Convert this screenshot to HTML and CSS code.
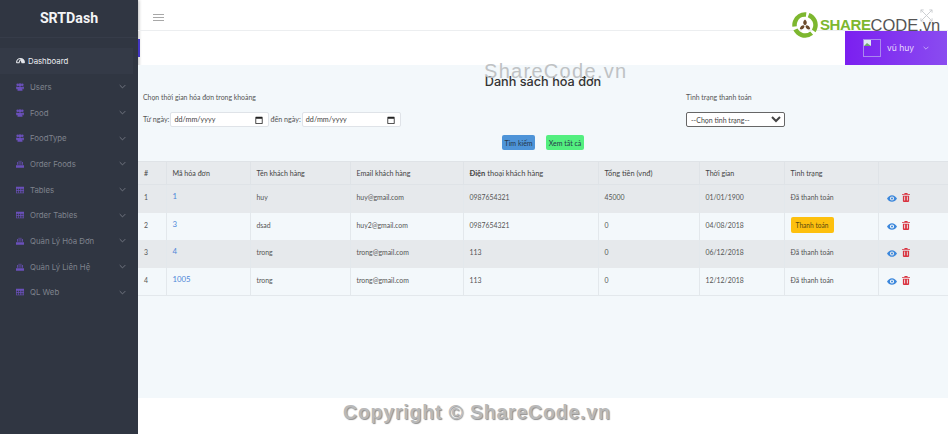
FILE: index.html
```html
<!DOCTYPE html>
<html lang="en">
<head>
    <meta charset="UTF-8">
    <meta name="viewport" content="width=device-width, initial-scale=1.0">
    <title>Danh sách hóa đơn</title>
    <link rel="stylesheet" href="styles.css">
</head>
<body>
    <svg class="defs" width="0" height="0">
        <symbol id="i-users" viewBox="0 0 12 12"><circle cx="2.5" cy="2.600" r="1.900"/><circle cx="9.500" cy="2.600" r="1.900"/><circle cx="6" cy="3" r="2.500"/><path d="M0 5.500h3.200L3 9.500H.5zM12 5.500H8.800L9 9.500h2.500zM3 6h6l.8 5.500H2.200z"/></symbol>
        <symbol id="i-food" viewBox="0 0 12 12"><path d="M0 8h12v3.500H0zM1.500 3h1.200v4.200H1.500zM4 1h1.200v6.200H4zM6.800 1H8v6.200H6.800zM9.300 3h1.200v4.200H9.300z"/></symbol>
        <symbol id="i-table" viewBox="0 0 12 12"><path fill-rule="evenodd" d="M0 1h12v10H0zM1 4v2h2V4zM4 4v2h2V4zM7 4v2h1.500V4zM9.500 4v2H11V4zM1 7v3h2V7zM4 7v3h2V7zM7 7v3h1.500V7zM9.500 7v3H11V7z"/></symbol>
        <symbol id="i-chev" viewBox="0 0 10 6"><path d="M1 1l4 4 4-4" fill="none" stroke="currentColor" stroke-width="1.200"/></symbol>
        <symbol id="i-eye" viewBox="0 0 12 8"><path fill-rule="evenodd" d="M0 4c1.500-2.500 3.500-4 6-4s4.500 1.500 6 4c-1.500 2.500-3.500 4-6 4S1.500 6.500 0 4zm6 2.500a2.500 2.500 0 100-5 2.500 2.500 0 000 5zM6 5.200a1.200 1.200 0 110-2.400 1.200 1.200 0 010 2.400z"/></symbol>
        <symbol id="i-trash" viewBox="0 0 9 10"><path fill-rule="evenodd" d="M3 0h3l.5 1H9v1H0V1h2.500zM1 3h7v6.200l-.8.800H1.800L1 9.200zM2.500 4v4.500h1V4zM5.500 4v4.500h1V4z"/></symbol>
        <symbol id="i-cal" viewBox="0 0 10 10"><path fill-rule="evenodd" d="M1 1h8l.5.500v8L9 10H1l-.5-.5v-8zM1.500 3.500V9h7V3.500z"/></symbol>
    </svg>

    <div class="layout">
        <aside class="sidebar">
            <div class="logo">SRTDash</div>
            <nav class="menu">
                <a class="menu-item active">
                    <svg class="dash-icon" viewBox="0 0 12 8" width="9" height="6"><path fill-rule="evenodd" d="M0 6a6 6 0 0112 0l-1 1H7.500L6 3 4.500 7H1zM1.500 5.500h2l1-2.500 1.500-1.500A4.500 4.500 0 001.500 5.500z"/></svg>
                    <span class="menu-text">Dashboard</span>
                </a>
                <a class="menu-item"><svg class="menu-icon"><use href="#i-users"/></svg><span class="menu-text">Users</span><svg class="chev"><use href="#i-chev"/></svg></a>
                <a class="menu-item"><svg class="menu-icon"><use href="#i-users"/></svg><span class="menu-text">Food</span><svg class="chev"><use href="#i-chev"/></svg></a>
                <a class="menu-item"><svg class="menu-icon"><use href="#i-users"/></svg><span class="menu-text">FoodType</span><svg class="chev"><use href="#i-chev"/></svg></a>
                <a class="menu-item"><svg class="menu-icon"><use href="#i-food"/></svg><span class="menu-text">Order Foods</span><svg class="chev"><use href="#i-chev"/></svg></a>
                <a class="menu-item"><svg class="menu-icon"><use href="#i-table"/></svg><span class="menu-text">Tables</span><svg class="chev"><use href="#i-chev"/></svg></a>
                <a class="menu-item"><svg class="menu-icon"><use href="#i-table"/></svg><span class="menu-text">Order Tables</span><svg class="chev"><use href="#i-chev"/></svg></a>
                <a class="menu-item"><svg class="menu-icon"><use href="#i-food"/></svg><span class="menu-text">Quản Lý Hóa Đơn</span><svg class="chev"><use href="#i-chev"/></svg></a>
                <a class="menu-item"><svg class="menu-icon"><use href="#i-food"/></svg><span class="menu-text">Quản Lý Liên Hệ</span><svg class="chev"><use href="#i-chev"/></svg></a>
                <a class="menu-item"><svg class="menu-icon"><use href="#i-table"/></svg><span class="menu-text">QL Web</span><svg class="chev"><use href="#i-chev"/></svg></a>
            </nav>
        </aside>

        <div class="main">
            <header class="topbar">
                <div class="burger"><span></span><span></span><span></span></div>
            </header>
            <div class="page-title">
                <div class="title-tab"></div>
                <div class="user-box">
                    <svg class="avatar" viewBox="0 0 18 18" width="18" height="18">
                        <path d="M1 1h7v6H1z" fill="#dfe6f5"/><path d="M1 7l3-3 2 1.500L8 7z" fill="#6fa86a"/>
                        <rect x=".5" y=".5" width="17" height="17" fill="none" stroke="#a988ee"/>
                    </svg>
                    <span class="user-name">vũ huy</span>
                    <svg class="user-chev"><use href="#i-chev"/></svg>
                </div>
            </div>

            <section class="content">
                <h4 class="heading">Danh sách hóa đơn</h4>
                <div class="filters">
                    <div class="filter-date">
                        <p class="filter-label">Chọn thời gian hóa đơn trong khoảng</p>
                        <div class="date-row">
                            <label>Từ ngày:</label>
                            <div class="date-input"><span>dd/mm/yyyy</span><svg class="ico-cal"><use href="#i-cal"/></svg></div>
                            <label>đến ngày:</label>
                            <div class="date-input"><span>dd/mm/yyyy</span><svg class="ico-cal"><use href="#i-cal"/></svg></div>
                        </div>
                    </div>
                    <div class="filter-status">
                        <p class="filter-label">Tình trạng thanh toán</p>
                        <select class="status-select"><option>--Chọn tình trạng--</option></select>
                    </div>
                </div>
                <div class="actions">
                    <button class="btn btn-search" type="button">Tìm kiếm</button>
                    <button class="btn btn-all" type="button">Xem tất cả</button>
                </div>

                <table class="bills">
                    <thead>
                        <tr>
                            <th class="c-num">#</th><th class="c-code">Mã hóa đơn</th><th class="c-name">Tên khách hàng</th>
                            <th class="c-email">Email khách hàng</th><th class="c-phone"><b>Điện</b> thoại khách hàng</th>
                            <th class="c-total">Tổng tiền (vnđ)</th><th class="c-time">Thời gian</th>
                            <th class="c-state">Tình trạng</th><th></th>
                        </tr>
                    </thead>
                    <tbody>
                        <tr class="r1">
                            <td>1</td><td><a class="code">1</a></td><td>huy</td><td>huy@gmail.com</td><td>0987654321</td><td>45000</td><td>01/01/1900</td><td>Đã thanh toán</td>
                            <td class="row-icons"><svg class="ico-eye"><use href="#i-eye"/></svg><svg class="ico-trash"><use href="#i-trash"/></svg></td>
                        </tr>
                        <tr class="r2">
                            <td>2</td><td><a class="code">3</a></td><td>dsad</td><td>huy2@gmail.com</td><td>0987654321</td><td>0</td><td>04/08/2018</td><td><button class="btn-pay" type="button">Thanh toán</button></td>
                            <td class="row-icons"><svg class="ico-eye"><use href="#i-eye"/></svg><svg class="ico-trash"><use href="#i-trash"/></svg></td>
                        </tr>
                        <tr class="r3">
                            <td>3</td><td><a class="code">4</a></td><td>trong</td><td>trong@gmail.com</td><td>113</td><td>0</td><td>06/12/2018</td><td>Đã thanh toán</td>
                            <td class="row-icons"><svg class="ico-eye"><use href="#i-eye"/></svg><svg class="ico-trash"><use href="#i-trash"/></svg></td>
                        </tr>
                        <tr class="r4">
                            <td>4</td><td><a class="code">1005</a></td><td>trong</td><td>trong@gmail.com</td><td>113</td><td>0</td><td>12/12/2018</td><td>Đã thanh toán</td>
                            <td class="row-icons"><svg class="ico-eye"><use href="#i-eye"/></svg><svg class="ico-trash"><use href="#i-trash"/></svg></td>
                        </tr>
                    </tbody>
                </table>
            </section>
            <footer class="page-foot"></footer>
        </div>
    </div>

    <!-- watermark layer -->
    <div class="wm-logo">
        <svg viewBox="0 0 26 26" width="26" height="26">
            <circle cx="13" cy="13" r="10.500" fill="none" stroke="#7db72f" stroke-width="4.500" stroke-dasharray="19 3" transform="rotate(-70 13 13)"/>
            <circle cx="13" cy="13.500" r="6" fill="#fff"/>
            <path d="M13 7.500c2 1.500 2.300 3.500 1.200 5l-1.200.8-1.200-.8c-1.100-1.500-.8-3.500 1.200-5zM7.800 17c.3-2.500 1.800-3.800 3.700-3.800l1 .9-.3 1.300c-1 1.800-2.800 2.500-4.400 1.600zM18.200 17c-1.600.9-3.400.2-4.400-1.600l-.3-1.300 1-.9c1.900 0 3.400 1.300 3.700 3.800z" fill="#6b4a2b"/>
        </svg>
        <span class="wm-share">SHARE</span><span class="wm-code">CODE.vn</span>
    </div>
    <svg class="wm-expand" viewBox="0 0 14 14" width="13" height="13"><path d="M1 1l12 12M13 1L1 13M1 1h3M1 1v3M13 1h-3M13 1v3M1 13h3M1 13v-3M13 13h-3M13 13v-3" fill="none" stroke="#c9cccf" stroke-width="1"/></svg>
    <div class="wm-text">ShareCode.vn</div>
    <div class="wm-copy">Copyright © ShareCode.vn</div>
</body>
</html>
```

FILE: styles.css
```css
* {
    box-sizing: border-box;
}
html, body {
    margin: 0;
    height: 434px;
    overflow: hidden;
}
body {
    font-family: 'Lato', sans-serif;
    font-size: 7.200px;
    color: #555;
    background: #fff;
    position: relative;
}
.defs {
    position: absolute;
}
.layout {
    display: flex;
    width: 948px;
    height: 434px;
}

/* sidebar */
.sidebar {
    width: 138px;
    flex-shrink: 0;
    background: #303642;
    box-shadow: 1px 0 3px rgba(0, 0, 0, 0.25);
}
.logo {
    height: 38px;
    padding-top: 9px;
    text-align: center;
    font-family: 'Roboto', sans-serif;
    font-weight: 700;
    font-size: 14.200px;
    line-height: 18px;
    color: #f4f4f6;
    border-bottom: 1px solid #363c49;
}
.menu {
    padding-top: 10px;
}
.menu-item {
    display: flex;
    align-items: center;
    height: 25.700px;
    padding-left: 16px;
    color: #7f838d;
    font-family: 'Inter', sans-serif;
    font-size: 7.800px;
}
.menu-item.active {
    height: 26px;
    margin-right: 5px;
    background: #343a47;
    color: #eceef2;
}
.dash-icon {
    fill: #e3e5ea;
    margin-right: 3px;
}
.menu-icon {
    width: 8px;
    height: 8px;
    fill: #6a50bb;
    margin-right: 6px;
    flex-shrink: 0;
}
.menu-text {
    flex: 1;
}
.chev {
    width: 7px;
    height: 5px;
    margin-right: 12px;
    color: #7d818b;
}

/* main */
.main {
    flex: 1;
    display: flex;
    flex-direction: column;
    min-width: 0;
}
.topbar {
    height: 31px;
    padding: 14px 0 0 15px;
    border-bottom: 1px solid #eceef0;
}
.burger span {
    display: block;
    width: 11px;
    height: 1px;
    margin-bottom: 2px;
    background: #a8a8a8;
}
.page-title {
    height: 34px;
    display: flex;
    justify-content: space-between;
    align-items: flex-start;
    padding-right: 1px;
}
.title-tab {
    width: 2px;
    height: 18px;
    margin-top: 8px;
    background: #4336c4;
}
.user-box {
    width: 102px;
    height: 34px;
    display: flex;
    align-items: center;
    padding-left: 18px;
    color: #e9defc;
    background: linear-gradient(to right, #7b1ff0, #8a4cf0);
    font-family: 'Inter', sans-serif;
    font-size: 8.500px;
}
.user-name {
    margin-left: 6px;
}
.user-chev {
    width: 6px;
    height: 4px;
    margin-left: 9px;
    color: #d9c8fa;
}
.content {
    height: 333px;
    padding-top: 9px;
    background: #f3f8fb;
}
.heading {
    margin: 0;
    text-align: center;
    font-family: 'Inter', sans-serif;
    font-weight: 500;
    font-size: 12.700px;
    line-height: 16px;
    color: #333;
}
.filters {
    display: flex;
    padding: 3px 0 0 5px;
}
.filter-date {
    width: 543px;
}
.filter-label {
    margin: 0 0 10px;
    font-size: 6.900px;
    line-height: 9px;
    color: #555;
}
.date-row {
    display: flex;
    align-items: center;
    gap: 1px;
}
.date-input {
    display: flex;
    align-items: center;
    justify-content: space-between;
    width: 99px;
    height: 15px;
    padding: 0 5px 0 3px;
    font-size: 7.200px;
    color: #444;
    background: #fff;
    border: 1px solid #dfe3e8;
    border-radius: 2px;
}
.ico-cal {
    width: 8px;
    height: 8px;
    fill: #222;
}
.status-select {
    width: 99px;
    height: 15px;
    font-family: 'Lato', sans-serif;
    font-size: 7px;
    color: #444;
    background: #fff;
    border: 1px solid #666;
    border-radius: 2px;
}
.actions {
    display: flex;
    justify-content: center;
    gap: 11px;
    height: 15px;
    margin-top: 8px;
}
.btn {
    height: 15px;
    padding: 0;
    font-family: 'Lato', sans-serif;
    font-size: 7px;
    color: #25374a;
    border: 1px solid transparent;
    border-radius: 2px;
}
.btn-search {
    width: 33px;
    background: #4e94d8;
}
.btn-all {
    width: 38px;
    background: #53ef7f;
}

/* table */
.bills {
    width: 810px;
    margin-top: 11px;
    border-collapse: collapse;
    table-layout: fixed;
    font-size: 6.900px;
}
.bills th {
    height: 23px;
    padding: 0 6px;
    text-align: left;
    font-size: 7.100px;
    font-weight: 400;
    color: #444;
    background: #e7eaed;
    border: 1px solid #dfe3e7;
}
.bills th.c-phone {
    font-size: 7.500px;
}
.bills th.c-total {
    font-size: 7.400px;
}
.bills td {
    padding: 0 6px 3px;
    color: #555;
    border-right: 1px solid #e3e8ec;
    border-left: 1px solid #e3e8ec;
}
.bills b {
    font-weight: 700;
}
.bills th:first-child, .bills td:first-child {
    border-left: none;
}
.bills th:last-child, .bills td:last-child {
    border-right: none;
}
.c-num { width: 28px; }
.c-code { width: 84px; }
.c-name { width: 100px; }
.c-email { width: 113px; }
.c-phone { width: 135px; }
.c-total { width: 101px; }
.c-time { width: 85px; }
.c-state { width: 94px; }
.r1 { height: 28px; background: #e6e9ec; }
.r2 { height: 27px; background: #f3f8fb; }
.r3 { height: 28px; background: #e6e9ec; }
.r4 { height: 28px; background: #f3f8fb; border-bottom: 1px solid #e3e8ec; }
.code {
    position: relative;
    top: -1px;
    color: #4f86d8;
    font-size: 7.800px;
}
.btn-pay {
    width: 43px;
    height: 16px;
    padding: 0;
    font-family: 'Lato', sans-serif;
    font-size: 6.600px;
    color: #5c4a10;
    background: #fdc00e;
    border: none;
    border-radius: 2px;
}
.bills td.row-icons {
    padding: 0 0 1px 8px;
    white-space: nowrap;
}
.ico-eye {
    width: 10px;
    height: 7px;
    fill: #3d88dc;
    margin-right: 5px;
}
.ico-trash {
    width: 8px;
    height: 9px;
    fill: #d9323f;
}
.page-foot {
    flex: 1;
    background: #fff;
}

/* watermark on top of page */
.wm-logo {
    position: absolute;
    left: 792px;
    top: 12px;
    display: flex;
    align-items: center;
    font-family: 'Liberation Sans', sans-serif;
    line-height: 26px;
}
.wm-logo svg {
    margin-right: 2px;
}
.wm-share {
    font-weight: 700;
    font-size: 15px;
    letter-spacing: -0.4px;
    color: #7db72f;
}
.wm-code {
    font-size: 16.500px;
    color: #555;
}
.wm-expand {
    position: absolute;
    left: 920px;
    top: 9px;
}
.wm-text {
    position: absolute;
    left: 484px;
    top: 60px;
    font-family: 'Liberation Sans', sans-serif;
    font-size: 20px;
    line-height: 22px;
    letter-spacing: 1.300px;
    color: #bfc2c4;
}
.wm-copy {
    position: absolute;
    left: 343px;
    top: 401px;
    font-family: 'Liberation Sans', sans-serif;
    font-weight: 700;
    font-size: 19.500px;
    line-height: 22px;
    letter-spacing: 0.800px;
    color: #b9b9b9;
    text-shadow: 1px 1px 1px #8f8f8f;
}
```
